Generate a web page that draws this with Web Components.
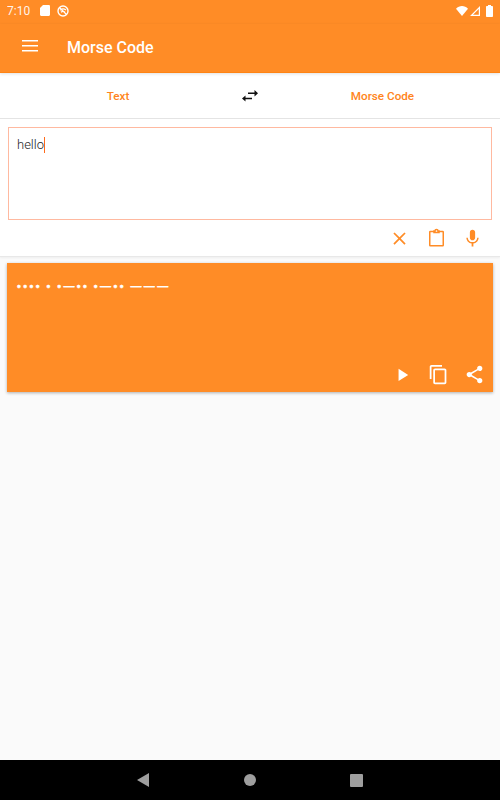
<!DOCTYPE html>
<html>
<head>
<meta charset="utf-8">
<title>Morse Code</title>
<style>
  html, body { margin: 0; height: 100%; }
  body { font-family: Roboto, "Liberation Sans", sans-serif; background: #fafafa; }
  morse-app { height: 800px; }
</style>
</head>
<body>
<morse-app>
  <status-bar></status-bar>
  <app-toolbar>Morse Code</app-toolbar>
  <mode-switch></mode-switch>
  <input-panel>hello</input-panel>
  <output-card>•••• • •—•• •—•• ———</output-card>
  <nav-bar></nav-bar>
</morse-app>

<script>
class MorseApp extends HTMLElement {
  constructor() {
    super();
    this.attachShadow({ mode: "open" });
    this.shadowRoot.innerHTML = `
      <style>
        :host { display: flex; flex-direction: column; background: #fafafa; }
        ::slotted(nav-bar) { margin-top: auto; }
      </style>
      <slot></slot>
    `;
  }
}

class StatusBar extends HTMLElement {
  constructor() {
    super();
    this.attachShadow({ mode: "open" });
    this.shadowRoot.innerHTML = `
      <style>
        :host { display: flex; align-items: center; height: 24px; box-sizing: border-box; padding: 0 7px 3px 7px; background: #ff8c26; color: #fff; font-size: 12px; }
        .time { width: 33px; opacity: .9; }
        svg { display: block; fill: #fff; }
        .sd { margin-right: 7px; }
        .right { margin-left: auto; display: flex; align-items: center; }
      </style>
      <span class="time">7:10</span>
      <svg class="sd" width="10" height="11" viewBox="0 0 10 11"><path d="M3 0H8.800C9.400 0 10 .5 10 1.200V9.800C10 10.500 9.400 11 8.800 11H1.200C.6 11 0 10.500 0 9.800V3Z"/></svg>
      <svg width="12" height="12" viewBox="0 0 12 12"><circle cx="6" cy="6" r="5" fill="none" stroke="#fff" stroke-width="1.400"/><path d="M3 5C4.800 3.700 7.200 3.700 9 5M4 7.200C5.200 6.300 6.800 6.300 8 7.200M2.500 2.500L9.500 9.500" fill="none" stroke="#fff" stroke-width="1.200"/></svg>
      <div class="right">
        <svg width="12" height="10" viewBox="0 0 12 10"><path d="M0 2.700C3.300-.9 8.700-.9 12 2.700L6 10Z"/></svg>
        <svg style="margin-left:2px" width="10" height="10" viewBox="0 0 10 10"><path d="M10 0V10H0ZM8.800 3L3 8.800H8.800Z" fill-rule="evenodd"/></svg>
        <svg style="margin-left:6px" width="7" height="12" viewBox="0 0 7 12"><path d="M2 0H5V1H6C6.500 1 7 1.400 7 2V11C7 11.600 6.500 12 6 12H1C.5 12 0 11.600 0 11V2C0 1.400.5 1 1 1H2Z"/></svg>
      </div>
    `;
  }
}

class AppToolbar extends HTMLElement {
  constructor() {
    super();
    this.attachShadow({ mode: "open" });
    this.shadowRoot.innerHTML = `
      <style>
        :host { display: flex; align-items: center; height: 49px; padding: 0 0 2px 22px; background: #ff8c26; color: #fff; font-size: 16px; font-weight: 500; box-sizing: border-box; border-bottom: 1px solid #ff8414; position: relative; z-index: 1; box-shadow: 0 1px 3px rgba(0,0,0,.12); }
        svg { display: block; margin: 0 29px 2px 0; fill: #fff; }
      </style>
      <svg width="16" height="12" viewBox="0 0 16 12"><path d="M0 0H16V1.500H0ZM0 5H16V6.500H0ZM0 10H16V11.500H0Z"/></svg>
      <slot></slot>
    `;
  }
}

class ModeSwitch extends HTMLElement {
  constructor() {
    super();
    this.attachShadow({ mode: "open" });
    this.shadowRoot.innerHTML = `
      <style>
        :host { display: grid; grid-template-columns: 1fr 28px 1fr; align-items: center; height: 46px; box-sizing: border-box; padding-top: 1px; background: #fff; border-bottom: 1px solid #e4e4e4; color: #ff8420; font-size: 11.700px; font-weight: 500; text-align: center; }
        svg { display: block; margin: 0 auto; }
        .to { padding-left: 1px; }
      </style>
      <span>Text</span>
      <svg width="16" height="12" viewBox="0 0 16 12"><path d="M16 3.200L12.500 0V2.500H6V4H12.500V6.500ZM0 8.500L3.500 5.500V7.800H10V9.300H3.500V11.500Z" fill="#111"/></svg>
      <span class="to">Morse Code</span>
    `;
  }
}

class InputPanel extends HTMLElement {
  constructor() {
    super();
    this.attachShadow({ mode: "open" });
    this.shadowRoot.innerHTML = `
      <style>
        :host { display: block; height: 138px; box-sizing: border-box; padding: 8px 8px 0; background: #fff; border-bottom: 1px solid #e8e8e8; box-shadow: 0 1px 2px rgba(0,0,0,.05); }
        .box { height: 93px; box-sizing: border-box; border: 1px solid #ffb9a0; padding: 9px 8px; font-size: 13px; line-height: 16px; color: #222; font-weight: 300; }
        .caret { display: inline-block; width: 1px; height: 16px; background: #ff6a1a; vertical-align: top; }
        .actions { display: flex; justify-content: flex-end; align-items: center; gap: 15.500px; height: 36px; padding-right: 9px; }
        svg { display: block; width: 21px; height: 21px; fill: #ff8c26; }
        .clip { fill: none; stroke: #ff8c26; stroke-width: 1.500; }
      </style>
      <div class="box"><slot></slot><span class="caret"></span></div>
      <div class="actions">
        <svg viewBox="0 0 24 24"><path d="M19 6.400L17.600 5 12 10.600 6.400 5 5 6.400 10.600 12 5 17.600 6.400 19 12 13.400 17.600 19 19 17.600 13.400 12Z"/></svg>
        <svg class="clip" viewBox="0 0 21 21"><path d="M8 3.500H4.300C4 3.500 3.750 3.750 3.750 4V17.300C3.750 17.600 4 17.800 4.300 17.800H16.700C17 17.800 17.250 17.600 17.250 17.300V4C17.250 3.750 17 3.500 16.700 3.500H13"/><path d="M8 4.500V3H9C9 1 12 1 12 3H13V4.500Z"/></svg>
        <svg viewBox="0 0 24 24"><path d="M12 14C13.700 14 15 12.700 15 11V5C15 3.300 13.700 2 12 2S9 3.300 9 5V11C9 12.700 10.300 14 12 14ZM17.300 11C17.300 14 14.800 16.100 12 16.100S6.700 14 6.700 11H5C5 14.400 7.700 17.200 11 17.700V21H13V17.700C16.300 17.200 19 14.400 19 11Z"/></svg>
      </div>
    `;
  }
}

class OutputCard extends HTMLElement {
  constructor() {
    super();
    this.attachShadow({ mode: "open" });
    this.shadowRoot.innerHTML = `
      <style>
        :host { display: flex; flex-direction: column; height: 129px; box-sizing: border-box; margin: 6px 7px 0; padding: 13px 10px 7px; background: #ff8c26; color: #fff; box-shadow: 0 1px 3px rgba(0,0,0,.3); }
        .code { font-family: "Liberation Sans", sans-serif; font-size: 11px; line-height: 20px; font-weight: 700; letter-spacing: 2.400px; word-spacing: -1px; -webkit-text-stroke: .3px #fff; }
        .actions { margin-top: auto; display: flex; justify-content: flex-end; gap: 15px; margin-right: -2px; }
        svg { display: block; width: 21px; height: 21px; fill: #fff; }
      </style>
      <div class="code"><slot></slot></div>
      <div class="actions">
        <svg viewBox="0 0 24 24"><path d="M7.500 5.500V19.500L18.500 12.500Z"/></svg>
        <svg viewBox="0 0 24 24"><path d="M16 1H4C2.900 1 2 1.900 2 3V17H4V3H16ZM19 5H8C6.900 5 6 5.900 6 7V21C6 22.100 6.900 23 8 23H19C20.100 23 21 22.100 21 21V7C21 5.900 20.100 5 19 5ZM19 21H8V7H19Z"/></svg>
        <svg viewBox="0 0 24 24"><path d="M18 16.100C17.200 16.100 16.500 16.400 16 16.900L8.900 12.700C9 12.500 9 12.200 9 12S9 11.500 8.900 11.300L16 7.200C16.500 7.700 17.200 8 18 8 19.700 8 21 6.700 21 5S19.700 2 18 2 15 3.300 15 5C15 5.200 15 5.500 15.100 5.700L8 9.800C7.500 9.300 6.800 9 6 9 4.300 9 3 10.300 3 12S4.300 15 6 15C6.800 15 7.500 14.700 8 14.200L15.100 18.400C15 18.600 15 18.800 15 19 15 20.600 16.300 21.900 18 21.900S21 20.600 21 19 19.700 16.100 18 16.100Z"/></svg>
      </div>
    `;
  }
}

class NavBar extends HTMLElement {
  constructor() {
    super();
    this.attachShadow({ mode: "open" });
    this.shadowRoot.innerHTML = `
      <style>
        :host { display: flex; justify-content: center; align-items: center; height: 40px; background: #000; }
        svg { display: block; fill: #9e9e9e; }
      </style>
      <svg width="12" height="14" viewBox="0 0 12 14"><path d="M12 0V14L0 7Z"/></svg>
      <svg style="margin:0 94px 0 95px" width="12" height="12" viewBox="0 0 12 12"><circle cx="6" cy="6" r="6"/></svg>
      <svg width="13" height="13" viewBox="0 0 13 13"><rect width="13" height="13" rx="1"/></svg>
    `;
  }
}

customElements.define("morse-app", MorseApp);
customElements.define("status-bar", StatusBar);
customElements.define("app-toolbar", AppToolbar);
customElements.define("mode-switch", ModeSwitch);
customElements.define("input-panel", InputPanel);
customElements.define("output-card", OutputCard);
customElements.define("nav-bar", NavBar);
</script>
</body>
</html>
